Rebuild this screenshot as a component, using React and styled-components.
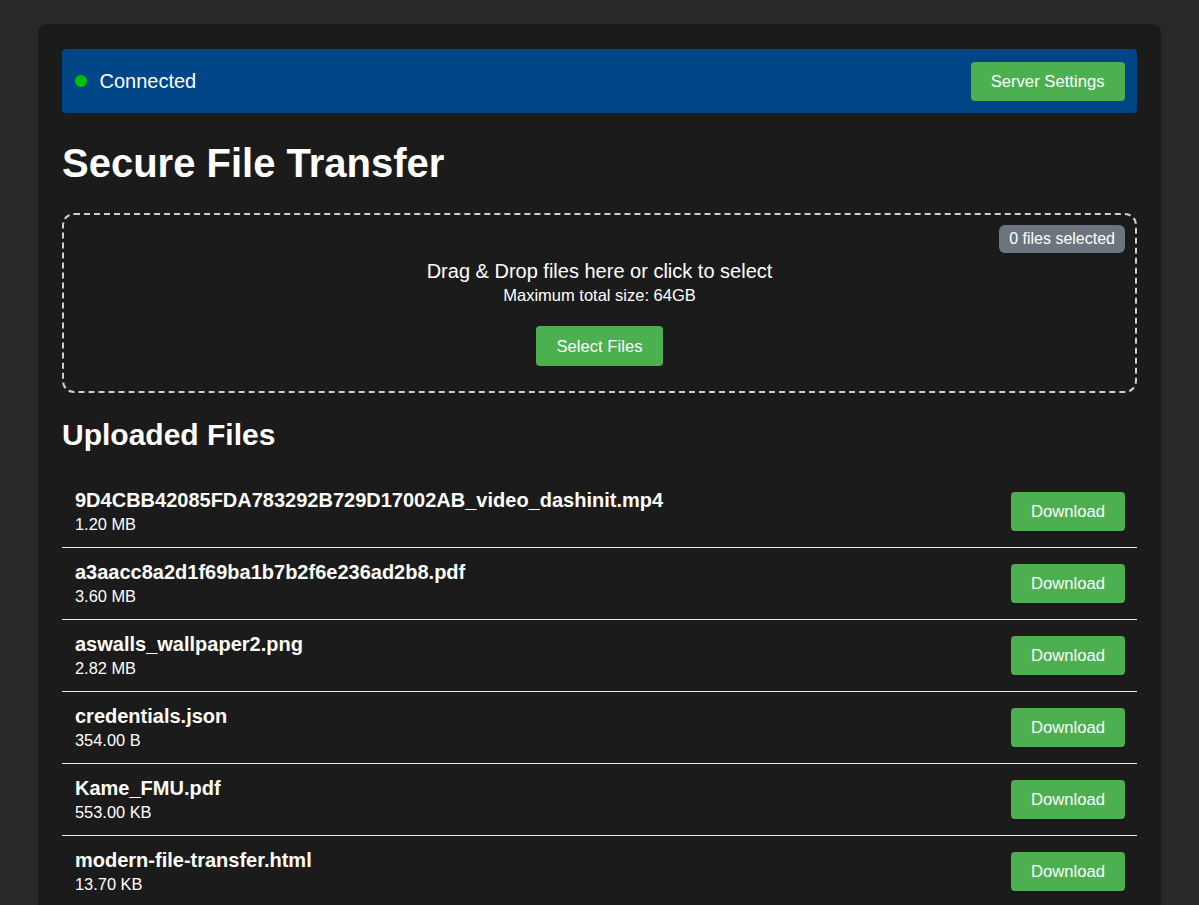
import React from 'react';
import styled, { createGlobalStyle } from 'styled-components';

const GlobalStyle = createGlobalStyle`
  html {
    overflow: hidden;
  }

  body {
    margin: 0;
    background: #282828;
    color: #fff;
    font-family: 'Liberation Sans', Arial, sans-serif;
  }
`;

const Container = styled.div`
  max-width: 1123px;
  margin: 24px auto;
  padding: 25px 24px;
  box-sizing: border-box;
  background: #1b1b1b;
  border-radius: 9px;
`;

const StatusBar = styled.div`
  display: flex;
  align-items: center;
  justify-content: space-between;
  padding: 12.5px;
  background: #004586;
  border-radius: 4px;
`;

const StatusLabel = styled.div`
  display: flex;
  align-items: center;
  gap: 13px;
  font-size: 20px;
`;

const Dot = styled.span`
  width: 12px;
  height: 12px;
  border-radius: 50%;
  background: ${(p) => (p.$online ? '#00c000' : '#d33')};
`;

const Button = styled.button`
  padding: 10px 20px;
  border: none;
  border-radius: 4px;
  background: #4caf50;
  color: #fff;
  font-family: inherit;
  font-size: 16.67px;
  line-height: 19px;
  cursor: pointer;
`;

const Title = styled.h1`
  margin: 27px 0;
  font-size: 40px;
  line-height: 46px;
  font-weight: bold;
`;

const DropZone = styled.div`
  position: relative;
  display: flex;
  flex-direction: column;
  align-items: center;
  padding: 45px 25px 25px;
  border: 2px dashed #cfcfcf;
  border-radius: 12px;
  text-align: center;
`;

const DropText = styled.p`
  margin: 0;
  font-size: 20px;
  line-height: 23px;
`;

const DropHint = styled.p`
  margin: 3px 0 21px;
  font-size: 16.5px;
  line-height: 19px;
`;

const SelectButton = styled(Button)`
  height: 40px;
`;

const Badge = styled.span`
  position: absolute;
  top: 10px;
  right: 10px;
  padding: 5px 10px;
  background: #6c757d;
  border-radius: 6px;
  font-size: 16px;
  line-height: 18px;
`;

const SectionTitle = styled.h2`
  margin: 24px 0 24px;
  font-size: 30px;
  line-height: 35px;
  font-weight: bold;
`;

const FileList = styled.ul`
  margin: 0;
  padding: 0;
  list-style: none;
`;

const FileRow = styled.li`
  display: flex;
  align-items: center;
  justify-content: space-between;
  padding: 12.75px 12px 12.75px 13px;
  border-bottom: 1px solid #e6e6e6;
`;

const FileInfo = styled.div`
  display: flex;
  flex-direction: column;
  gap: 3.5px;
`;

const FileName = styled.span`
  font-size: 20px;
  line-height: 23px;
  font-weight: bold;
`;

const FileSize = styled.span`
  font-size: 16.4px;
  line-height: 19px;
`;

const files = [
  { name: '9D4CBB42085FDA783292B729D17002AB_video_dashinit.mp4', size: '1.20 MB' },
  { name: 'a3aacc8a2d1f69ba1b7b2f6e236ad2b8.pdf', size: '3.60 MB' },
  { name: 'aswalls_wallpaper2.png', size: '2.82 MB' },
  { name: 'credentials.json', size: '354.00 B' },
  { name: 'Kame_FMU.pdf', size: '553.00 KB' },
  { name: 'modern-file-transfer.html', size: '13.70 KB' },
];

export default function App() {
  return (
    <>
      <GlobalStyle />
      <Container>
        <StatusBar>
          <StatusLabel>
            <Dot $online />
            Connected
          </StatusLabel>
          <Button>Server Settings</Button>
        </StatusBar>

        <Title>Secure File Transfer</Title>

        <DropZone>
          <Badge>0 files selected</Badge>
          <DropText>Drag &amp; Drop files here or click to select</DropText>
          <DropHint>Maximum total size: 64GB</DropHint>
          <SelectButton>Select Files</SelectButton>
        </DropZone>

        <SectionTitle>Uploaded Files</SectionTitle>
        <FileList>
          {files.map((f) => (
            <FileRow key={f.name}>
              <FileInfo>
                <FileName>{f.name}</FileName>
                <FileSize>{f.size}</FileSize>
              </FileInfo>
              <Button>Download</Button>
            </FileRow>
          ))}
        </FileList>
      </Container>
    </>
  );
}
